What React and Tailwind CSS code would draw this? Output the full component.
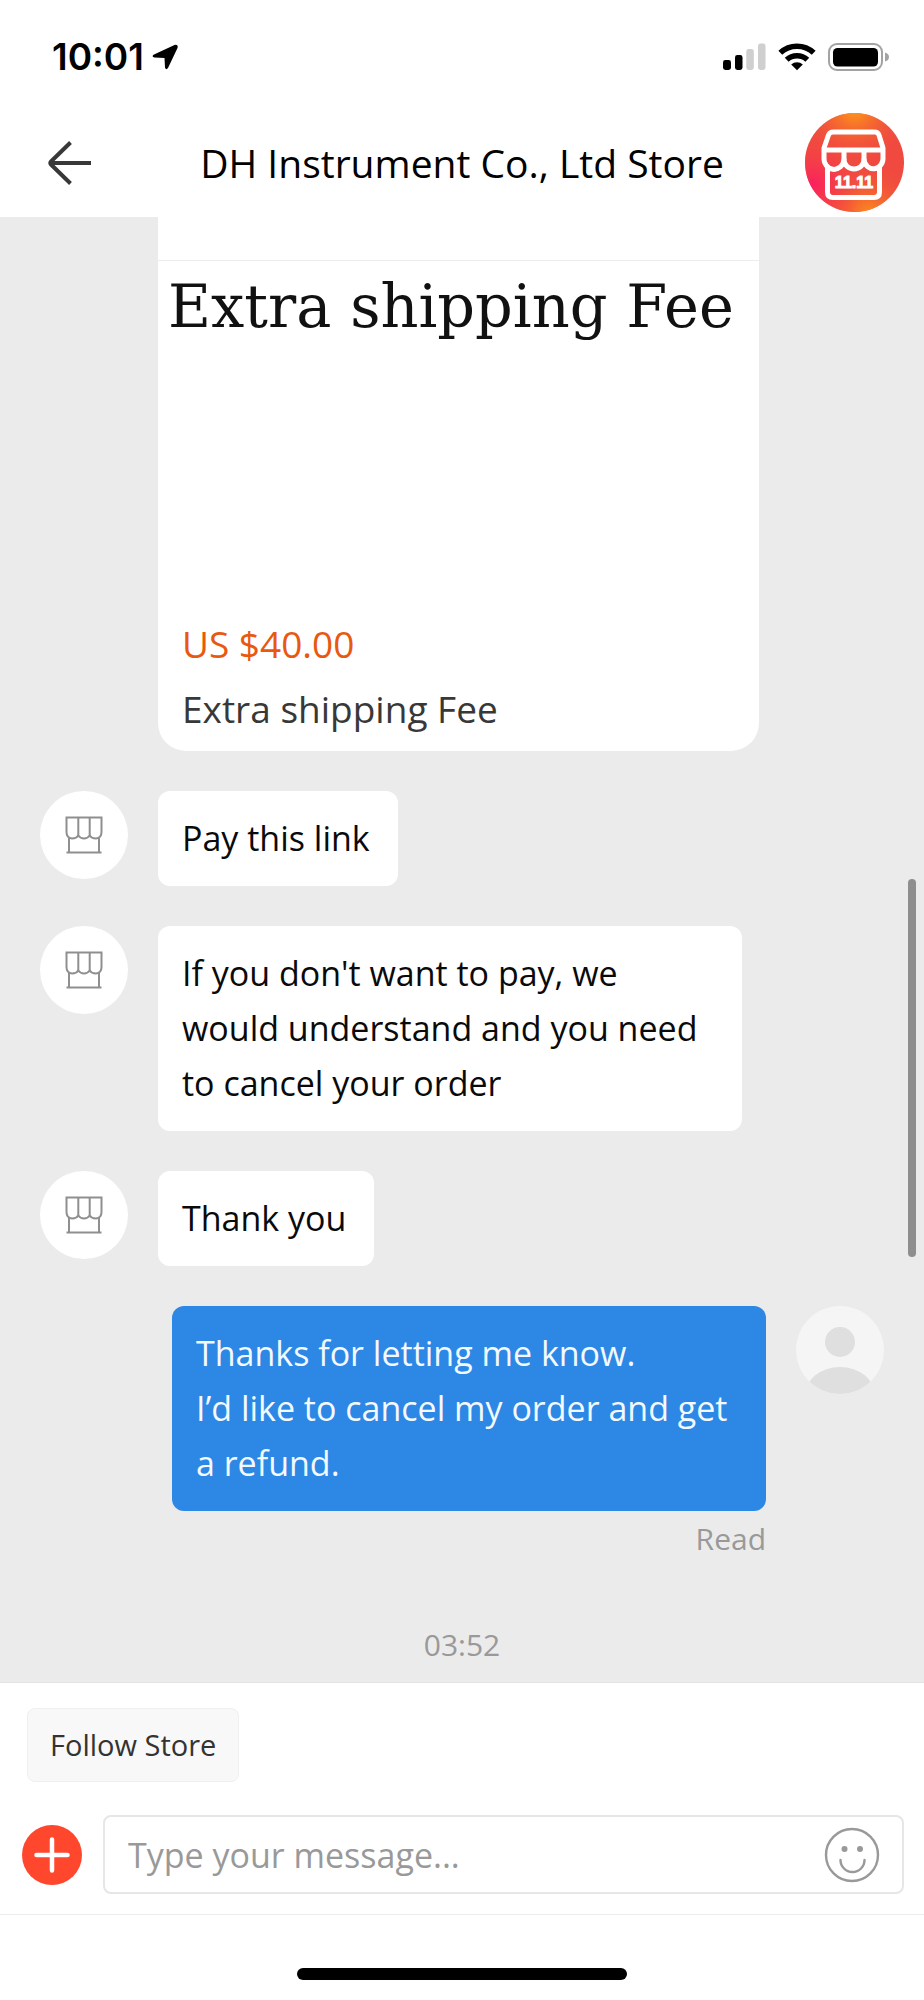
import { useState } from 'react';

const messages = [
  { id: 1, from: 'store', text: 'Pay this link' },
  { id: 2, from: 'store', text: "If you don't want to pay, we would understand and you need to cancel your order" },
  { id: 3, from: 'store', text: 'Thank you' },
  { id: 4, from: 'me', text: 'Thanks for letting me know.\nI’d like to cancel my order and get a refund.', status: 'Read' },
];

export default function App() {
  return (
    <div className="flex min-h-screen flex-col bg-white font-['Open_Sans','Noto_Sans',sans-serif] text-black">
      <StatusBar />
      <Header title="DH Instrument Co., Ltd Store" />
      <main className="relative flex-1 bg-[#ebebeb] px-10 pb-4">
        <ProductCard />
        <div className="mt-10 flex flex-col gap-10">
          {messages.map((m) => <Message key={m.id} message={m} />)}
        </div>
        <p className="mt-[66px] text-center text-[30px] leading-10 text-[#999]">03:52</p>
        <div className="absolute top-[662px] right-2 h-[378px] w-2 rounded-full bg-[#8e8e8e]" />
      </main>
      <Composer />
    </div>
  );
}

function StatusBar() {
  return (
    <div className="flex h-[108px] items-center justify-between pt-[6px] pr-[35px] pl-[52px]">
      <div className="flex items-center gap-2">
        <span className="font-['Inter',sans-serif] text-[37px] leading-10 font-semibold">10:01</span>
        <svg className="h-[26px] w-[26px]" viewBox="0 0 26 26" aria-hidden="true">
          <path d="M2 10.5 22.5 1Q26.5 0 25.5 4L16 24Q14 26.500 13 23.500L12.500 14 2.500 13.500Q-1 12.500 2 10.500Z" />
        </svg>
      </div>
      <div className="flex items-center gap-3">
        <svg className="h-7 w-[43px]" viewBox="0 0 43 28" aria-hidden="true">
          <rect x="0" y="17" width="8" height="10" rx="2.4" />
          <rect x="12" y="12" width="7.5" height="15" rx="2.4" />
          <rect x="23.3" y="6" width="7.5" height="21" rx="2.4" fill="#cfcfcf" />
          <rect x="35" y="0.6" width="7.5" height="26.4" rx="2.4" fill="#cfcfcf" />
        </svg>
        <svg className="h-7 w-[38px]" viewBox="0 0 38 28" fill="none" stroke="#000" strokeWidth="5.6" aria-hidden="true">
          <path d="M2.3 9.8A24.5 24.5 0 0 1 35.7 9.8" />
          <path d="M8.7 16.8A15 15 0 0 1 29.3 16.8" />
          <path d="M13.2 21.6A8.5 8.5 0 0 1 24.8 21.6L19 27.2Z" fill="#000" stroke="none" />
        </svg>
        <svg className="h-7 w-[61px]" viewBox="0 0 61 28" aria-hidden="true">
          <rect x="1" y="1" width="53" height="26" rx="8" fill="none" stroke="#a3a3a3" strokeWidth="2" />
          <rect x="5" y="5" width="45" height="18.5" rx="4.5" />
          <path d="M57 9.5Q61 10.5 61 14T57 18.5Z" fill="#a3a3a3" />
        </svg>
      </div>
    </div>
  );
}

function Header({ title }) {
  return (
    <header className="flex h-[109px] items-center justify-between pr-5 pl-12">
      <button type="button" aria-label="Back" className="w-[71px]">
        <svg className="h-11 w-[43px]" viewBox="0 0 43 44" fill="none" stroke="#383838" strokeWidth="4" aria-hidden="true">
          <path d="M22.5 1.5 3 20.5Q1.5 22 3 23.5L22.5 42.5" />
          <path d="M2.5 22H43" />
        </svg>
      </button>
      <h1 className="text-[39px] leading-[52px]">{title}</h1>
      <a href="#store" aria-label="Open store">
        <StoreBadge />
      </a>
    </header>
  );
}

function StoreBadge() {
  return (
    <svg className="h-[99px] w-[99px]" viewBox="0 0 99 99" aria-hidden="true">
      <defs>
        <radialGradient id="pink" cx="0.08" cy="0.72" r="0.5">
          <stop offset="0" stopColor="#fb1f5f" />
          <stop offset="1" stopColor="#f5483f" stopOpacity="0" />
        </radialGradient>
        <radialGradient id="top" cx="0.5" cy="-0.05" r="0.55">
          <stop offset="0" stopColor="#ffa012" />
          <stop offset="1" stopColor="#f0503c" stopOpacity="0" />
        </radialGradient>
        <radialGradient id="bottom" cx="0.65" cy="1.02" r="0.5">
          <stop offset="0" stopColor="#fd8f1a" />
          <stop offset="1" stopColor="#f0503c" stopOpacity="0" />
        </radialGradient>
      </defs>
      <circle cx="49.5" cy="49.5" r="49.5" fill="#f04a40" />
      <circle cx="49.5" cy="49.5" r="49.5" fill="url(#top)" />
      <circle cx="49.5" cy="49.5" r="49.5" fill="url(#bottom)" />
      <circle cx="49.5" cy="49.5" r="49.5" fill="url(#pink)" />
      <g fill="none" stroke="#fff" strokeWidth="5" strokeLinejoin="round">
        <path d="M28.5 19H69.5Q73 19 74 22L78 35V44A9.500 10.500 0 0 1 59 46.500A9.500 9 0 0 1 39 46.500A9.500 10.500 0 0 1 19 44V35L23.500 22Q24.500 19 28.500 19Z" />
        <path d="M19 37H78" />
        <path d="M39 37V47M59 37V47" />
        <path d="M22.500 53V79Q22.500 84.500 28 84.500H69Q74.500 84.500 74.500 79V53" />
      </g>
      <text x="49" y="75" textAnchor="middle" fill="#fff" stroke="#fff" className="font-['Liberation_Sans_Narrow','Liberation_Sans',sans-serif] text-[16px] font-bold">11.11</text>
    </svg>
  );
}

function ProductCard() {
  return (
    <a href="#product" className="ml-[118px] block max-w-[601px] rounded-b-[28px] bg-white pb-[10px]">
      <div className="h-11 border-b border-[#ececec]" />
      <div className="h-[350px] pt-3 pl-[10px] font-['DejaVu_Serif',serif] text-[59px] leading-[68px] whitespace-nowrap text-[#111]">
        Extra shipping Fee
      </div>
      <p className="px-6 text-[37px] leading-[65px] text-[#e8590f]">US $40.00</p>
      <p className="px-6 text-[37px] leading-[65px] text-[#383838]">Extra shipping Fee</p>
    </a>
  );
}

function Message({ message }) {
  if (message.from === 'me') {
    return (
      <div className="flex justify-end gap-[30px]">
        <div>
          <p className="max-w-[594px] rounded-xl bg-[#2d87e4] py-5 pr-7 pl-6 text-[34px] leading-[55px] whitespace-pre-line text-[#f2f9ff]">{message.text}</p>
          <p className="mt-2 text-right text-[30px] leading-10 text-[#999]">{message.status}</p>
        </div>
        <UserAvatar />
      </div>
    );
  }
  return (
    <div className="flex items-start gap-[30px]">
      <StoreAvatar />
      <p className="max-w-[584px] rounded-xl bg-white py-5 pr-7 pl-6 text-[34px] leading-[55px] text-[#0a0a0a]">{message.text}</p>
    </div>
  );
}

function StoreAvatar() {
  return (
    <div className="flex h-[88px] w-[88px] shrink-0 items-center justify-center rounded-full bg-white">
      <svg className="h-[38px] w-[38px]" viewBox="0 0 38 38" fill="none" stroke="#8f8f8f" strokeWidth="2" aria-hidden="true">
        <path d="M1.5 1.5H36.5V16Q36.5 22 31 22.5Q26.5 22.5 24.7 19.5Q22.5 22.5 19 22.5T13.3 19.5Q11.5 22.5 7 22.5Q1.5 22 1.5 16Z" />
        <path d="M13.3 1.5V19.5M24.7 1.5V19.5M4 21.5V36.5M34 21.5V36.5" />
        <path d="M1.5 36.5H36.5" />
      </svg>
    </div>
  );
}

function UserAvatar() {
  return (
    <svg className="h-[88px] w-[88px] shrink-0" viewBox="0 0 88 88" aria-hidden="true">
      <clipPath id="face"><circle cx="44" cy="44" r="44" /></clipPath>
      <circle cx="44" cy="44" r="44" fill="#f5f5f5" />
      <circle cx="44" cy="36" r="15" fill="#dfdfdf" />
      <ellipse cx="44" cy="89" rx="35" ry="28" fill="#dfdfdf" clipPath="url(#face)" />
    </svg>
  );
}

function Composer() {
  const [text, setText] = useState('');

  return (
    <footer className="border-t border-[#e4e4e4] bg-white">
      <form className="border-b border-[#ececec] pt-[25px] pr-5 pb-5 pl-[22px]" onSubmit={(e) => e.preventDefault()}>
        <button type="button" className="ml-[5px] h-[74px] rounded-lg border border-[#efefef] bg-[#f8f8f8] px-[22px] text-[29px] leading-10 text-[#333]">
          Follow Store
        </button>
        <div className="mt-[33px] flex items-center gap-[21px]">
          <button type="button" aria-label="Add attachment" className="shrink-0">
            <svg className="h-[60px] w-[60px]" viewBox="0 0 60 60" aria-hidden="true">
              <circle cx="30" cy="30" r="30" fill="#ff472e" />
              <path d="M30 14.5V45.5M14.5 30H45.5" stroke="#fff" strokeWidth="4.5" strokeLinecap="round" />
            </svg>
          </button>
          <div className="flex h-[79px] min-w-0 flex-1 items-center rounded-lg border-2 border-[#e6e6e6] pr-[22px] pl-[23px]">
            <input
              aria-label="Message"
              className="min-w-0 flex-1 text-[34px] leading-[46px] outline-none placeholder:text-[#999]"
              placeholder="Type your message..."
              value={text}
              onChange={(e) => setText(e.target.value)}
            />
            <button type="button" aria-label="Emoji">
              <svg className="h-[56px] w-[56px]" viewBox="0 0 56 56" fill="none" stroke="#999" strokeWidth="2.4" aria-hidden="true">
                <circle cx="28" cy="28" r="26" />
                <path d="M16.5 33A12 12 0 0 0 40.5 33" strokeLinecap="round" />
                <circle cx="20.5" cy="22" r="3" fill="#999" stroke="none" />
                <circle cx="36" cy="22" r="3" fill="#999" stroke="none" />
              </svg>
            </button>
          </div>
        </div>
      </form>
      <div className="flex justify-center pt-[53px] pb-5">
        <div className="h-3 w-[330px] rounded-full bg-black" />
      </div>
    </footer>
  );
}
